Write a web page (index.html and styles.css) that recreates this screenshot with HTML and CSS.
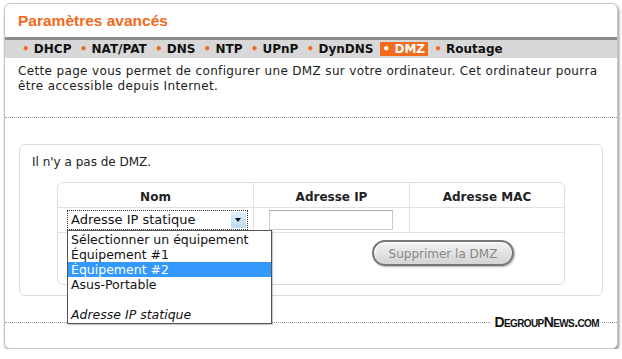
FILE: index.html
```html
<!DOCTYPE html>
<html>
<head>
    <meta charset="UTF-8">
    <title>Paramètres avancés</title>
    <link rel="stylesheet" href="styles.css">
</head>
<body>
<div class="panel">
    <div class="title">Paramètres avancés</div>
    <div class="tabs">
        <span class="tab"><b>•</b> DHCP</span>
        <span class="tab"><b>•</b> NAT/PAT</span>
        <span class="tab"><b>•</b> DNS</span>
        <span class="tab"><b>•</b> NTP</span>
        <span class="tab"><b>•</b> UPnP</span>
        <span class="tab"><b>•</b> DynDNS</span>
        <span class="tab on"><b>•</b> DMZ</span>
        <span class="tab"><b>•</b> Routage</span>
    </div>
    <p class="desc">Cette page vous permet de configurer une DMZ sur votre ordinateur. Cet ordinateur pourra être accessible depuis Internet.</p>
    <div class="dots"></div>

    <div class="box">
        <p class="none">Il n'y a pas de DMZ.</p>
        <table class="dmz">
            <tr><th class="c1">Nom</th><th class="c2">Adresse IP</th><th class="c3">Adresse MAC</th></tr>
            <tr>
                <td class="c1">
                    <div class="select">
                        <span class="sel_txt">Adresse IP statique</span>
                        <span class="sel_btn"><i></i></span>
                        <ul class="list">
                            <li>Sélectionner un équipement</li>
                            <li>Équipement #1</li>
                            <li class="hl">Équipement #2</li>
                            <li>Asus-Portable</li>
                            <li>&nbsp;</li>
                            <li class="it">Adresse IP statique</li>
                        </ul>
                    </div>
                </td>
                <td class="c2"><span class="ip"></span></td>
                <td class="c3"></td>
            </tr>
            <tr><td colspan="3" class="btn_row"><span class="sub">Supprimer la DMZ</span></td></tr>
        </table>
    </div>

    <div class="foot">
        <span class="logo">DegroupNews.com</span>
    </div>
</div>
</body>
</html>
```

FILE: styles.css
```css
body{ margin: 0; padding: 3px 0 0 4px; background: #fff;
    font-family: "DejaVu Sans", Verdana, sans-serif; font-size: 12px; color: #333;}
.panel{
    width: 612px;
    height: 344px;
    border: 1px solid #c8c8c8;
    border-radius: 6px;
    box-shadow: 1px 2px 3px rgba(0,0,0,0.45);
    background: #fff;
    position: relative;
}
.title{
    height: 25px;
    padding: 8px 0 0 13px;
    font-family: "Liberation Sans", Arial, sans-serif;
    font-size: 15.5px;
    font-weight: bold;
    color: #f26a1b;
}
.tabs{
    height: 18px;
    border-top: 3px solid #8c8c8c;
    background: #d8d8d8;
    padding-left: 15px;
    font-weight: bold;
    font-size: 12px;
    color: #111;
    line-height: 18px;
    white-space: nowrap;
}
.tab{ padding: 0 2px; }
.tab b{ color: #f26a1b; }
.tab.on{ background: #f26a1b; color: #fff; padding: 0 3px; }
.tab.on b{ color: #fff; }
.desc{
    margin: 6px 0 0 0;
    padding: 0 13px;
    line-height: 15px;
    letter-spacing: 0.35px;
    color: #222;
}
.dots{
    margin-top: 23px;
    border-top: 1px dotted #999;
}
.box{
    margin: 26px 14px 0 14px;
    border: 1px solid #dcdcdc;
    border-radius: 6px;
    height: 150px;
    padding: 0 12px;
}
.none{ margin: 10px 0 0 0; color: #222; }
.dmz{
    margin: 13px 0 0 25px;
    width: 508px;
    border-collapse: separate;
    border-spacing: 0;
    border: 1px solid #dcdcdc;
    border-radius: 6px;
    font-size: 12px;
}
.dmz th{
    height: 25px;
    padding: 0;
    border-bottom: 1px solid #e2e2e2;
    color: #222;
    vertical-align: bottom;
    padding-bottom: 3px;
    box-sizing: border-box;
}
.dmz td{ height: 24px; padding: 0; border-bottom: 1px solid #e2e2e2; }
.dmz .c1{ width: 195px; border-right: 1px solid #e2e2e2; }
.dmz .c2{ width: 155px; border-right: 1px solid #e2e2e2; }
.dmz td.btn_row{ border: 0; height: 44px; text-align: right; padding-right: 50px; vertical-align: top; padding-top: 7px; }
.select{
    position: relative;
    margin-left: 9px;
    width: 181px;
    height: 20px;
    border: 1px dotted #333;
    box-sizing: border-box;
    font-size: 13px;
    line-height: 18px;
    color: #111;
}
.sel_txt{ padding-left: 3px; }
.sel_btn{
    position: absolute;
    right: 1px; top: 1px;
    width: 15px; height: 16px;
    background: linear-gradient(#e2f1fc, #b8daf3);
}
.sel_btn i{
    position: absolute;
    left: 4px; top: 6px;
    border-left: 3px solid transparent;
    border-right: 3px solid transparent;
    border-top: 4px solid #111;
}
.list{
    position: absolute;
    left: -1px; top: 19px;
    width: 203px;
    margin: 0; padding: 1px 0 1px 0;
    list-style: none;
    background: #fff;
    border: 1px solid #555;
    box-shadow: 1px 1px 1px rgba(0,0,0,0.2);
    font-size: 12.5px;
    z-index: 2;
}
.list li{ height: 15px; line-height: 15px; padding-left: 3px; color: #111; }
.list li.hl{ background: #3399ff; color: #fff; }
.list li.it{ font-style: italic; }
.ip{
    display: inline-block;
    margin-left: 15px;
    width: 124px; height: 20px;
    border: 1px solid #ccc;
    border-top-color: #aaa;
    box-sizing: border-box;
    vertical-align: middle;
}
.sub{
    display: inline-block;
    width: 142px; height: 26px;
    line-height: 24px;
    box-sizing: border-box;
    text-align: center;
    border: 2px solid #777;
    border-radius: 13px;
    background: linear-gradient(#f2f2f2, #d4d4d4);
    box-shadow: inset 1px 1px 2px #fff, 1px 1px 2px rgba(0,0,0,0.3);
    color: #888;
    font-size: 12px;
}
.foot{
    margin-top: 26px;
    border-top: 1px dotted #999;
    position: relative;
}
.logo{
    position: absolute;
    right: 16px; top: -9px;
    background: #fff;
    padding: 0 2px;
    font-family: "Liberation Sans", Arial, sans-serif;
    font-weight: bold;
    font-variant: small-caps;
    font-size: 14px;
    letter-spacing: -0.6px;
    color: #111;
}
```
